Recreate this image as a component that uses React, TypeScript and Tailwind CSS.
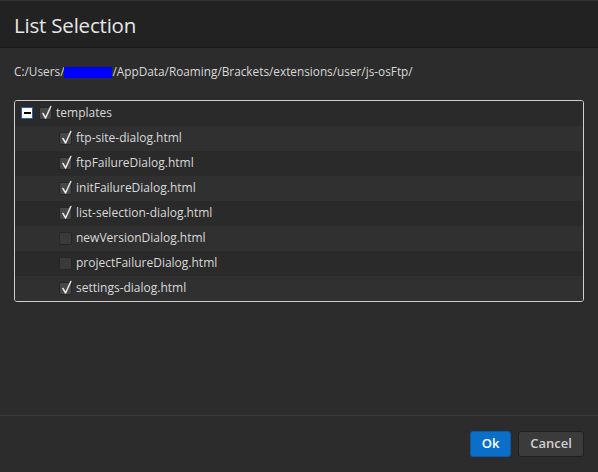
import { useState } from 'react';

// --- Data ---
interface FileItem {
  name: string;
  checked: boolean;
}

const initialFiles: FileItem[] = [
  { name: 'ftp-site-dialog.html', checked: true },
  { name: 'ftpFailureDialog.html', checked: true },
  { name: 'initFailureDialog.html', checked: true },
  { name: 'list-selection-dialog.html', checked: true },
  { name: 'newVersionDialog.html', checked: false },
  { name: 'projectFailureDialog.html', checked: false },
  { name: 'settings-dialog.html', checked: true },
];

const font = { fontFamily: '"Open Sans", "Liberation Sans", sans-serif' };

function CheckBox({ checked, onClick }: { checked: boolean; onClick: () => void }) {
  return (
    <button
      onClick={onClick}
      className={`relative w-[13px] h-[13px] shrink-0 rounded-[2px] border border-[#262626] ${checked ? 'bg-[#474747]' : 'bg-[#3a3a3a]'}`}
    >
      {checked && (
        <svg width="13" height="15" viewBox="0 0 13 15" className="absolute left-[0px] top-[-3px]">
          <path d="M3 8.5 L5.6 13 L10.8 1.5" fill="none" stroke="#e8e8e8" strokeWidth="1.5" strokeLinecap="round" strokeLinejoin="round" />
        </svg>
      )}
    </button>
  );
}

export default function App() {
  const [files, setFiles] = useState(initialFiles);
  const [open, setOpen] = useState(true);
  const allChecked = files.some(f => f.checked);

  const toggle = (i: number) =>
    setFiles(prev => prev.map((f, idx) => (idx === i ? { ...f, checked: !f.checked } : f)));

  return (
    <div className="w-[598px] h-[472px] bg-[#2c2c2c] flex flex-col text-[#d9d9d9]" style={font}>
      {/* Header */}
      <div className="h-[48px] shrink-0 bg-[#222222] border-t border-[#333] border-b border-b-[#1a1a1a] flex items-center px-[14px] pt-[3px]">
        <h1 className="text-[20.5px] text-[#e6e6e6] tracking-[-0.2px]">List Selection</h1>
      </div>

      {/* Body */}
      <div className="flex-1 px-[14px] pt-[14px]">
        <p className="text-[11.8px] text-[#d9d9d9] h-[20px] flex items-center">
          C:/Users/<span className="inline-block w-[48px] h-[11px] bg-[#0000ff]" />/AppData/Roaming/Brackets/extensions/user/js-osFtp/
        </p>

        <div className="mt-[18px] border border-[#cfcfcf] rounded-[3px] overflow-hidden">
          <div className="h-[25px] flex items-center bg-[#2a2a2a] pl-[6px] pb-[1px]">
            <button
              onClick={() => setOpen(!open)}
              className="w-[12px] h-[12px] bg-white border border-[#2d5fa8] flex items-center justify-center"
            >
              <span className="w-[7px] h-[2px] bg-black" />
            </button>
            <div className="ml-[6px] flex">
              <CheckBox checked={allChecked} onClick={() => setFiles(prev => prev.map(f => ({ ...f, checked: !allChecked })))} />
            </div>
            <span className="ml-[4px] text-[12px] leading-[16px]">templates</span>
          </div>
          {open &&
            files.map((f, i) => (
              <div
                key={f.name}
                className={`h-[25px] flex items-center pl-[44px] pb-[1px] ${i % 2 === 0 ? 'bg-[#303030]' : 'bg-[#2a2a2a]'}`}
              >
                <CheckBox checked={f.checked} onClick={() => toggle(i)} />
                <span className="ml-[4px] text-[12px] leading-[16px]">{f.name}</span>
              </div>
            ))}
        </div>
      </div>

      {/* Footer */}
      <div className="h-[57px] shrink-0 border-t border-[#3a3a3a] flex items-center justify-end gap-[7px] px-[14px]">
        <button className="w-[41px] h-[26px] rounded-[3px] bg-[#0b6fc9] border border-[#0a5aa3] text-white text-[13px] font-semibold">
          Ok
        </button>
        <button className="w-[66px] h-[26px] rounded-[3px] bg-[#3b3b3b] border border-[#202020] text-[#d0d0d0] text-[13px] font-semibold">
          Cancel
        </button>
      </div>
    </div>
  );
}
